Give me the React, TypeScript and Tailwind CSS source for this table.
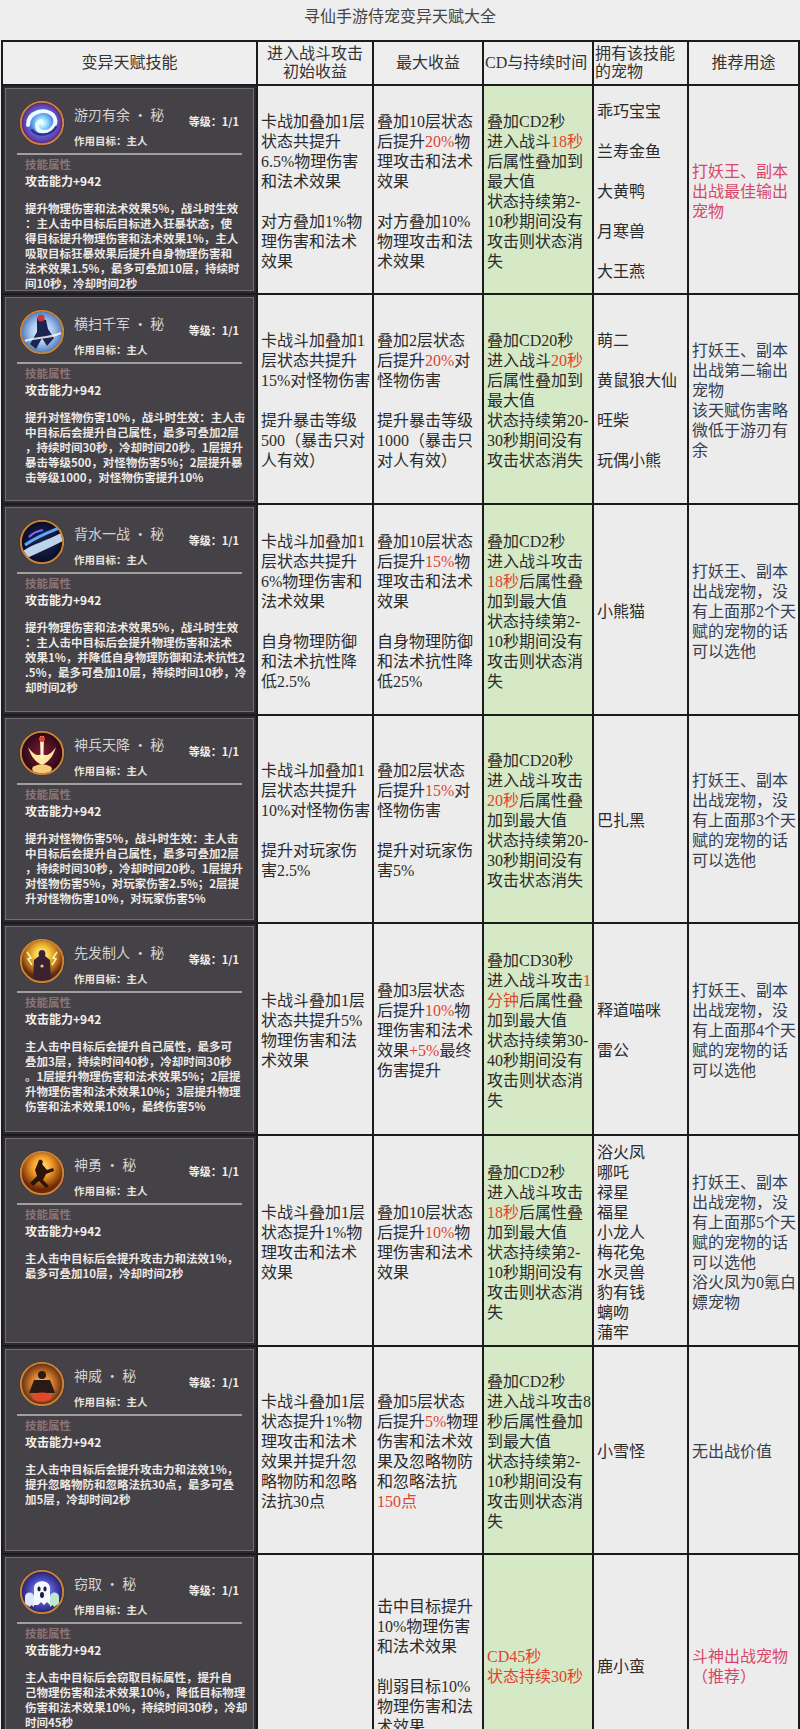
import React from "react";

type Skill = {
  name: string;
  icon: string;
  desc: string[];
};

type Row = {
  skill: Skill;
  c2: string[];
  c3: string[];
  c4: string[];
  c5: string[];
  c6: string[];
  c4Red?: boolean;
  c6Pink?: boolean;
};

const rows: Row[] = [
  {
    skill: {
      name: "游刃有余 · 秘",
      icon: "swirl",
      desc: [
        "提升物理伤害和法术效果5%，战斗时生效",
        "：主人击中目标后目标进入狂暴状态，使",
        "得目标提升物理伤害和法术效果1%，主人",
        "吸取目标狂暴效果后提升自身物理伤害和",
        "法术效果1.5%，最多可叠加10层，持续时",
        "间10秒，冷却时间2秒",
      ],
    },
    c2: ["卡战加叠加1层", "状态共提升", "6.5%物理伤害", "和法术效果", "", "对方叠加1%物", "理伤害和法术", "效果"],
    c3: ["叠加10层状态", "后提升{20%}物", "理攻击和法术", "效果", "", "对方叠加10%", "物理攻击和法", "术效果"],
    c4: ["叠加CD2秒", "进入战斗{18秒}", "后属性叠加到", "最大值", "状态持续第2-", "10秒期间没有", "攻击则状态消", "失"],
    c5: ["乖巧宝宝", "", "兰寿金鱼", "", "大黄鸭", "", "月寒兽", "", "大王燕"],
    c6: ["打妖王、副本", "出战最佳输出", "宠物"],
    c6Pink: true,
  },
  {
    skill: {
      name: "横扫千军 · 秘",
      icon: "sweep",
      desc: [
        "提升对怪物伤害10%，战斗时生效：主人击",
        "中目标后会提升自己属性，最多可叠加2层",
        "，持续时间30秒，冷却时间20秒。1层提升",
        "暴击等级500，对怪物伤害5%；2层提升暴",
        "击等级1000，对怪物伤害提升10%",
      ],
    },
    c2: ["卡战斗加叠加1", "层状态共提升", "15%对怪物伤害", "", "提升暴击等级", "500（暴击只对", "人有效）"],
    c3: ["叠加2层状态", "后提升{20%}对", "怪物伤害", "", "提升暴击等级", "1000（暴击只", "对人有效）"],
    c4: ["叠加CD20秒", "进入战斗{20秒}", "后属性叠加到", "最大值", "状态持续第20-", "30秒期间没有", "攻击状态消失"],
    c5: ["萌二", "", "黄鼠狼大仙", "", "旺柴", "", "玩偶小熊"],
    c6: ["打妖王、副本", "出战第二输出", "宠物", "该天赋伤害略", "微低于游刃有", "余"],
  },
  {
    skill: {
      name: "背水一战 · 秘",
      icon: "water",
      desc: [
        "提升物理伤害和法术效果5%，战斗时生效",
        "：主人击中目标后会提升物理伤害和法术",
        "效果1%，并降低自身物理防御和法术抗性2",
        ".5%，最多可叠加10层，持续时间10秒，冷",
        "却时间2秒",
      ],
    },
    c2: ["卡战斗加叠加1", "层状态共提升", "6%物理伤害和", "法术效果", "", "自身物理防御", "和法术抗性降", "低2.5%"],
    c3: ["叠加10层状态", "后提升{15%}物", "理攻击和法术", "效果", "", "自身物理防御", "和法术抗性降", "低25%"],
    c4: ["叠加CD2秒", "进入战斗攻击", "{18秒}后属性叠", "加到最大值", "状态持续第2-", "10秒期间没有", "攻击则状态消", "失"],
    c5: ["小熊猫"],
    c6: ["打妖王、副本", "出战宠物，没", "有上面那2个天", "赋的宠物的话", "可以选他"],
  },
  {
    skill: {
      name: "神兵天降 · 秘",
      icon: "sword",
      desc: [
        "提升对怪物伤害5%，战斗时生效：主人击",
        "中目标后会提升自己属性，最多可叠加2层",
        "，持续时间30秒，冷却时间20秒。1层提升",
        "对怪物伤害5%，对玩家伤害2.5%；2层提",
        "升对怪物伤害10%，对玩家伤害5%",
      ],
    },
    c2: ["卡战斗加叠加1", "层状态共提升", "10%对怪物伤害", "", "提升对玩家伤", "害2.5%"],
    c3: ["叠加2层状态", "后提升{15%}对", "怪物伤害", "", "提升对玩家伤", "害5%"],
    c4: ["叠加CD20秒", "进入战斗攻击", "{20秒}后属性叠", "加到最大值", "状态持续第20-", "30秒期间没有", "攻击状态消失"],
    c5: ["巴扎黑"],
    c6: ["打妖王、副本", "出战宠物，没", "有上面那3个天", "赋的宠物的话", "可以选他"],
  },
  {
    skill: {
      name: "先发制人 · 秘",
      icon: "first",
      desc: [
        "主人击中目标后会提升自己属性，最多可",
        "叠加3层，持续时间40秒，冷却时间30秒",
        "。1层提升物理伤害和法术效果5%；2层提",
        "升物理伤害和法术效果10%；3层提升物理",
        "伤害和法术效果10%，最终伤害5%",
      ],
    },
    c2: ["卡战斗叠加1层", "状态共提升5%", "物理伤害和法", "术效果"],
    c3: ["叠加3层状态", "后提升{10%}物", "理伤害和法术", "效果{+5%}最终", "伤害提升"],
    c4: ["叠加CD30秒", "进入战斗攻击{1}", "{分钟}后属性叠", "加到最大值", "状态持续第30-", "40秒期间没有", "攻击则状态消", "失"],
    c5: ["释道喵咪", "", "雷公"],
    c6: ["打妖王、副本", "出战宠物，没", "有上面那4个天", "赋的宠物的话", "可以选他"],
  },
  {
    skill: {
      name: "神勇 · 秘",
      icon: "brave",
      desc: ["主人击中目标后会提升攻击力和法效1%，", "最多可叠加10层，冷却时间2秒"],
    },
    c2: ["卡战斗叠加1层", "状态提升1%物", "理攻击和法术", "效果"],
    c3: ["叠加10层状态", "后提升{10%}物", "理伤害和法术", "效果"],
    c4: ["叠加CD2秒", "进入战斗攻击", "{18秒}后属性叠", "加到最大值", "状态持续第2-", "10秒期间没有", "攻击则状态消", "失"],
    c5: ["浴火凤", "哪吒", "禄星", "福星", "小龙人", "梅花兔", "水灵兽", "豹有钱", "螭吻", "蒲牢"],
    c6: ["打妖王、副本", "出战宠物，没", "有上面那5个天", "赋的宠物的话", "可以选他", "浴火凤为0氪白", "嫖宠物"],
  },
  {
    skill: {
      name: "神威 · 秘",
      icon: "might",
      desc: [
        "主人击中目标后会提升攻击力和法效1%，",
        "提升忽略物防和忽略法抗30点，最多可叠",
        "加5层，冷却时间2秒",
      ],
    },
    c2: ["卡战斗叠加1层", "状态提升1%物", "理攻击和法术", "效果并提升忽", "略物防和忽略", "法抗30点"],
    c3: ["叠加5层状态", "后提升{5%}物理", "伤害和法术效", "果及忽略物防", "和忽略法抗", "{150点}"],
    c4: ["叠加CD2秒", "进入战斗攻击8", "秒后属性叠加", "到最大值", "状态持续第2-", "10秒期间没有", "攻击则状态消", "失"],
    c5: ["小雪怪"],
    c6: ["无出战价值"],
  },
  {
    skill: {
      name: "窃取 · 秘",
      icon: "steal",
      desc: [
        "主人击中目标后会窃取目标属性，提升自",
        "己物理伤害和法术效果10%，降低目标物理",
        "伤害和法术效果10%，持续时间30秒，冷却",
        "时间45秒",
      ],
    },
    c2: [],
    c3: ["击中目标提升", "10%物理伤害", "和法术效果", "", "削弱目标10%", "物理伤害和法", "术效果"],
    c4: ["CD45秒", "状态持续30秒"],
    c5: ["鹿小蛮"],
    c6: ["斗神出战宠物", "（推荐）"],
    c4Red: true,
    c6Pink: true,
  },
];

function Line({ text }: { text: string }) {
  if (text === "") return <div className="h-[20px]" />;
  const parts = text.split(/(\{[^}]*\})/).filter((p) => p !== "");
  return (
    <div className="whitespace-nowrap">
      {parts.map((p, i) =>
        p.startsWith("{") ? (
          <span key={i} className="text-[#e2432f]">
            {p.slice(1, -1)}
          </span>
        ) : (
          <span key={i}>{p}</span>
        )
      )}
    </div>
  );
}

function Cell({ lines, className }: { lines: string[]; className: string }) {
  return (
    <div className={`flex items-center pl-[3px] pt-[4px] text-[16px] leading-[20px] ${className}`}>
      <div>
        {lines.map((l, i) => (
          <Line key={i} text={l} />
        ))}
      </div>
    </div>
  );
}

function SkillIcon({ kind }: { kind: string }) {
  const id = `g-${kind}`;
  const stops: Record<string, [string, string][]> = {
    swirl: [["0%", "#ffffff"], ["25%", "#86d8ff"], ["55%", "#4c72d8"], ["80%", "#6a3aa8"], ["100%", "#2a1550"]],
    sweep: [["0%", "#f2f8ff"], ["50%", "#a9c9ee"], ["100%", "#3c6cb4"]],
    water: [["0%", "#1c2244"], ["60%", "#12163a"], ["100%", "#070a1e"]],
    sword: [["0%", "#7a1a30"], ["60%", "#4a0e22"], ["100%", "#1e0810"]],
    first: [["0%", "#fffbd0"], ["35%", "#f6c83a"], ["75%", "#b86a18"], ["100%", "#5a2a0c"]],
    brave: [["0%", "#ffec8a"], ["45%", "#f39a24"], ["100%", "#6e2808"]],
    might: [["0%", "#ffd070"], ["50%", "#d2782a"], ["100%", "#4e2010"]],
    steal: [["0%", "#a8c0ff"], ["55%", "#4e4cc2"], ["100%", "#1e1a58"]],
  };
  return (
    <svg width="46" height="46" viewBox="0 0 46 46" className="shrink-0">
      <defs>
        <radialGradient id={id} cx="50%" cy={kind === "first" || kind === "brave" ? "35%" : "50%"} r="55%">
          {stops[kind].map(([o, c]) => (
            <stop key={o} offset={o} stopColor={c} />
          ))}
        </radialGradient>
        <clipPath id={`c-${kind}`}>
          <circle cx="23" cy="23" r="20.5" />
        </clipPath>
      </defs>
      <circle cx="23" cy="23" r="22.5" fill="#2a1a12" />
      <circle cx="23" cy="23" r="20.5" fill={`url(#${id})`} />
      <g clipPath={`url(#c-${kind})`}>
        {kind === "swirl" && (
          <>
            <path d="M9 25 C 9 12, 26 7, 34 15 C 40 23, 33 33, 24 32 C 17 31, 16 23, 22 21" fill="none" stroke="#eafcff" strokeWidth="4" strokeLinecap="round" />
            <path d="M13 30 C 18 37, 32 36, 37 27" fill="none" stroke="#3a2c90" strokeWidth="2.5" strokeLinecap="round" />
          </>
        )}
        {kind === "sweep" && (
          <>
            <path d="M18 9 L27 11 L29 20 L35 29 L28 37 L23 29 L17 40 L11 35 L18 23 Z" fill="#1c2450" />
            <circle cx="22" cy="9" r="3.5" fill="#c43a3a" />
            <path d="M6 32 C 14 28, 30 30, 42 24" fill="none" stroke="#ffffff" strokeWidth="2" opacity="0.8" />
          </>
        )}
        {kind === "water" && (
          <>
            <path d="M4 32 C 14 25, 27 22, 42 14 L 44 22 C 30 29, 18 34, 6 40 Z" fill="#cfe9ff" opacity="0.9" />
            <path d="M6 26 C 17 18, 30 13, 40 9" fill="none" stroke="#5ca6ff" strokeWidth="3" />
            <path d="M10 18 C 14 14, 18 12, 24 11" fill="none" stroke="#7a6cff" strokeWidth="2" />
          </>
        )}
        {kind === "sword" && (
          <>
            <path d="M9 17 C 15 26, 20 26, 23 24 C 26 26, 31 26, 37 17 C 33 30, 27 33, 23 35 C 19 33, 13 30, 9 17 Z" fill="#ffe7a0" />
            <path d="M21 6 L25 6 L24.4 29 L21.6 29 Z" fill="#fff4cc" />
            <circle cx="23" cy="9" r="3" fill="#e4402e" />
            <path d="M13 38 C 18 33, 28 33, 33 38 L 31 46 L 15 46 Z" fill="#f2cc78" />
          </>
        )}
        {kind === "first" && (
          <>
            <path d="M23 12 C 26 12, 27 15, 26 18 L 31 22 L 32 42 L 14 42 L 15 22 L 20 18 C 19 15, 20 12, 23 12 Z" fill="#3a2232" />
            <path d="M8 14 L12 20 L9 21 L13 27" fill="none" stroke="#fff7b0" strokeWidth="1.5" />
            <path d="M38 14 L34 20 L37 21 L33 27" fill="none" stroke="#fff7b0" strokeWidth="1.5" />
            <circle cx="23" cy="28" r="1.6" fill="#f6d04a" />
          </>
        )}
        {kind === "brave" && (
          <path d="M20 10 C 23 9, 25 12, 23 14 L 28 20 L 34 18 L 35 21 L 27 24 L 24 30 L 30 36 L 27 38 L 20 31 L 14 36 L 11 33 L 18 26 L 16 20 Z" fill="#2a1508" />
        )}
        {kind === "might" && (
          <>
            <circle cx="23" cy="14" r="4" fill="#2a1a14" />
            <path d="M15 19 L31 19 L36 32 L10 32 Z" fill="#2a1a14" />
            <ellipse cx="23" cy="36" rx="10" ry="4.5" fill="#e04a2a" />
          </>
        )}
        {kind === "steal" && (
          <>
            <path d="M6 38 L6 28 C 6 22, 15 22, 15 28 L 15 38 L 12.5 36 L 10.5 38 L 8.5 36 Z" fill="#dfe6ff" />
            <path d="M31 38 L31 28 C 31 22, 40 22, 40 28 L 40 38 L 37.5 36 L 35.5 38 L 33.5 36 Z" fill="#bfe8d0" />
            <path d="M15 36 L15 19 C 15 10, 31 10, 31 19 L 31 36 L 28 33 L 25 36 L 22 33 L 19 36 Z" fill="#f5f7ff" />
            <ellipse cx="20" cy="20" rx="1.6" ry="2.4" fill="#1c1a40" />
            <ellipse cx="26" cy="20" rx="1.6" ry="2.4" fill="#1c1a40" />
            <ellipse cx="23" cy="26" rx="2" ry="3" fill="#1c1a40" />
          </>
        )}
      </g>
      <circle cx="23" cy="23" r="21.2" fill="none" stroke="#c8843c" strokeWidth="2" />
    </svg>
  );
}

function SkillCard({ skill }: { skill: Skill }) {
  return (
    <div className="bg-[#2c2a2e] p-[2px]">
      <div className="h-full border border-[#716d72] bg-[#444147] font-['Noto_Sans_CJK_SC',sans-serif]">
        <div className="flex pl-[13px] pt-[11px]">
          <SkillIcon kind={skill.icon} />
          <div className="ml-[9px] flex-1 pr-[14px]">
            <div className="flex items-start justify-between pt-[4px]">
              <span className="text-[14px] leading-[20px] text-[#d6d2cf]">{skill.name}</span>
              <span className="pt-[10px] text-[11px] font-bold leading-[14px] text-[#f2eeea]">等级：1/1</span>
            </div>
            <div className="mt-[6px] text-[10.5px] font-bold leading-[14px] text-[#e6e2de]">作用目标：主人</div>
          </div>
        </div>
        <div className="mx-[11px] mt-[5px] h-[2px] bg-[#a29e9e]" />
        <div className="px-[19px]">
          <div className="mt-[2px] text-[11.5px] font-bold leading-[14px] text-[#8c7474]">技能属性</div>
          <div className="mt-[2px] text-[12px] font-bold leading-[16px] text-[#f4f0ec]">攻击能力+942</div>
          <div className="mt-[12px] text-[11.5px] font-bold leading-[15px] text-[#ece8e4]">
            {skill.desc.map((d, i) => (
              <div key={i} className="whitespace-nowrap">
                {d}
              </div>
            ))}
          </div>
        </div>
      </div>
    </div>
  );
}

export default function App() {
  const body = "bg-[#ececec] text-[#2b2b2b]";
  return (
    <div className="h-[1729px] w-[800px] overflow-hidden bg-[#eeeeee] font-['Liberation_Serif','Noto_Sans_CJK_SC',serif]">
      <div className="h-[40px] pt-[5px] text-center font-['Noto_Sans_CJK_SC',sans-serif] text-[16px] leading-[20px] text-[#444]">
        寻仙手游侍宠变异天赋大全
      </div>

      <div className="ml-[1px] grid w-[799px] grid-cols-[253px_114px_108px_108px_93px_109px] grid-rows-[42px_207px_208px_209px_206px_210px_209px_206px_220px] gap-[2px] bg-[#1b1b1b] p-[2px]">
        {/* header */}
        <div className="flex items-center justify-center bg-[#eeeeee] text-[16px] text-[#333]">变异天赋技能</div>
        <div className="flex items-center justify-center bg-[#eeeeee] text-center text-[16px] leading-[18px] text-[#333]">
          进入战斗攻击
          <br />
          初始收益
        </div>
        <div className="flex items-center justify-center bg-[#eeeeee] text-[16px] text-[#333]">最大收益</div>
        <div className="flex items-center whitespace-nowrap bg-[#eeeeee] pl-[1px] text-[16px] text-[#333]">CD与持续时间</div>
        <div className="flex items-center bg-[#eeeeee] pl-[1px] text-[16px] leading-[18px] text-[#333]">
          拥有该技能
          <br />
          的宠物
        </div>
        <div className="flex items-center justify-center bg-[#eeeeee] text-[16px] text-[#333]">推荐用途</div>

        {rows.map((r, i) => (
          <React.Fragment key={i}>
            <SkillCard skill={r.skill} />
            <Cell lines={r.c2} className={body} />
            <Cell lines={r.c3} className={body} />
            <Cell lines={r.c4} className={`bg-[#d6e9c6] ${r.c4Red ? "text-[#e2432f]" : "text-[#2b2b2b]"}`} />
            <Cell lines={r.c5} className={body} />
            <Cell lines={r.c6} className={`bg-[#ececec] ${r.c6Pink ? "text-[#d9456a]" : "text-[#38404f]"}`} />
          </React.Fragment>
        ))}
      </div>
    </div>
  );
}
